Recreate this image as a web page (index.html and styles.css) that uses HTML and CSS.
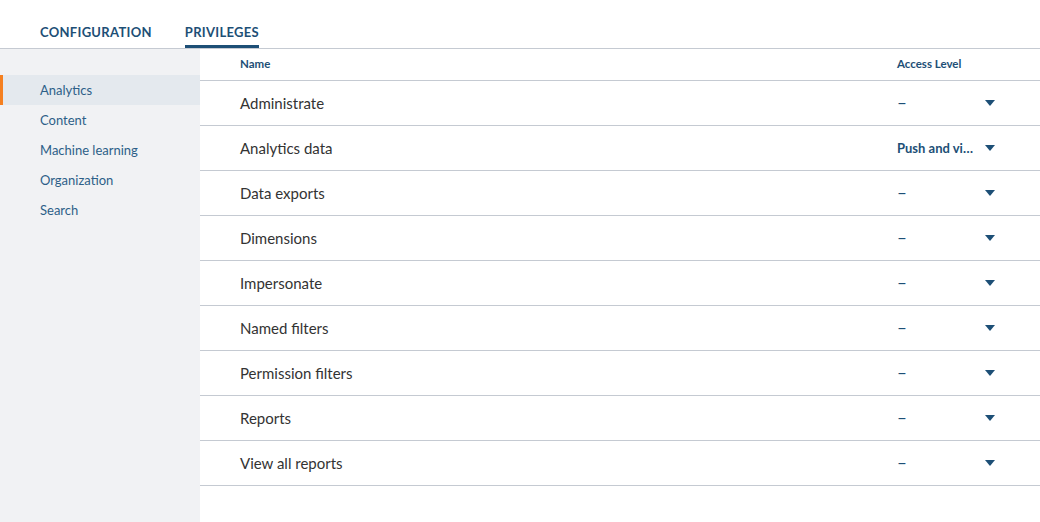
FILE: index.html
```html
<!DOCTYPE html>
<html>
<head>
<meta charset="utf-8">
<link rel="stylesheet" href="styles.css">
</head>
<body>
<div class="tabs">
  <div class="tab">Configuration</div>
  <div class="tab active">Privileges</div>
</div>
<div class="main">
  <nav class="sidebar">
    <div class="item active">Analytics</div>
    <div class="item">Content</div>
    <div class="item">Machine learning</div>
    <div class="item">Organization</div>
    <div class="item">Search</div>
  </nav>
  <div class="table">
    <div class="row head">
      <div class="name">Name</div>
      <div class="access">Access Level</div>
    </div>
    <div class="row"><div class="name">Administrate</div><div class="access"><span class="val">–</span><span class="caret"></span></div></div>
    <div class="row"><div class="name">Analytics data</div><div class="access"><span class="val strong" title="Push and view">Push and view</span><span class="caret"></span></div></div>
    <div class="row"><div class="name">Data exports</div><div class="access"><span class="val">–</span><span class="caret"></span></div></div>
    <div class="row"><div class="name">Dimensions</div><div class="access"><span class="val">–</span><span class="caret"></span></div></div>
    <div class="row"><div class="name">Impersonate</div><div class="access"><span class="val">–</span><span class="caret"></span></div></div>
    <div class="row"><div class="name">Named filters</div><div class="access"><span class="val">–</span><span class="caret"></span></div></div>
    <div class="row"><div class="name">Permission filters</div><div class="access"><span class="val">–</span><span class="caret"></span></div></div>
    <div class="row"><div class="name">Reports</div><div class="access"><span class="val">–</span><span class="caret"></span></div></div>
    <div class="row"><div class="name">View all reports</div><div class="access"><span class="val">–</span><span class="caret"></span></div></div>
  </div>
</div>
</body>
</html>
```
FILE: styles.css
```css
* { box-sizing: border-box; }
html, body { margin: 0; padding: 0; height: 100%; }
body {
  font-family: Lato, "Open Sans", sans-serif;
  background: #fff;
  color: #333;
  display: flex;
  flex-direction: column;
}
.tabs {
  height: 49px;
  border-bottom: 1px solid #c5cad2;
  display: flex;
  gap: 33px;
  padding-left: 40px;
  align-items: flex-end;
}
.tab {
  text-transform: uppercase;
  font-weight: 700;
  font-size: 13px;
  letter-spacing: 0.3px;
  color: #1d4f76;
  height: 48px;
  padding-top: 24px;
  border-bottom: 3px solid transparent;
}
.tab.active { border-bottom-color: #1d4f76; }
.main {
  flex: 1;
  display: flex;
}
.sidebar {
  width: 200px;
  background: #f1f2f4;
  padding-top: 26px;
}
.item {
  height: 30px;
  line-height: 30px;
  padding-left: 40px;
  font-size: 13px;
  color: #2d5f88;
}
.item.active {
  background: #e4e9ee;
  border-left: 3px solid #f58020;
  padding-left: 37px;
}
.table { flex: 1; }
.row {
  display: flex;
  align-items: center;
  height: 45px;
  border-bottom: 1px solid #c5cad2;
  padding-left: 40px;
}
.row.head {
  height: 32px;
  padding-bottom: 2px;
  font-weight: 700;
  color: #1d4f76;
}
.name { flex: 1; font-size: 15px; color: #333; }
.head .name { font-size: 11.5px; color: #1d4f76; }
.access {
  width: 143px;
  display: flex;
  align-items: center;
}
.head .access { font-size: 11.5px; }
.val {
  width: 80px;
  font-size: 17px;
  line-height: 20px;
  color: #1d4f76;
  white-space: nowrap;
  overflow: hidden;
  text-overflow: ellipsis;
}
.val.strong { font-size: 13px; font-weight: 700; }
.caret {
  width: 0; height: 0;
  margin-left: 8px;
  border-left: 5px solid transparent;
  border-right: 5px solid transparent;
  border-top: 6px solid #1d4f76;
}
```
